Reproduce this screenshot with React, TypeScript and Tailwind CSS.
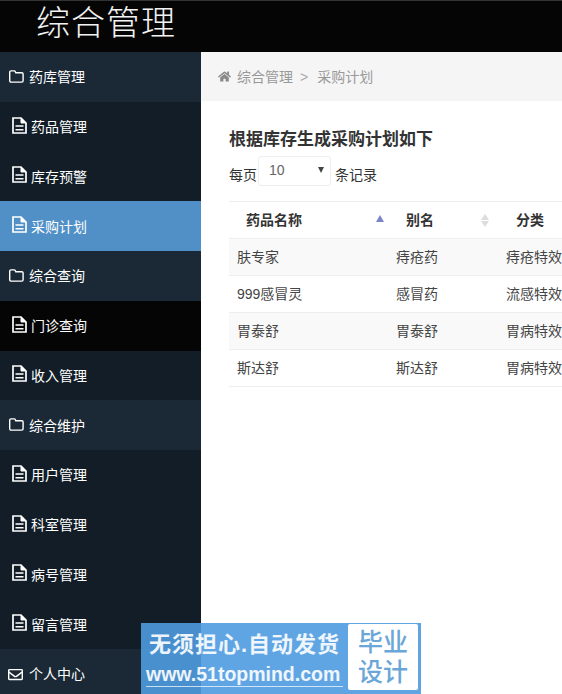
import { FaHome, FaRegEnvelope } from 'react-icons/fa';

const cjk = "font-['Liberation_Sans','Noto_Sans_CJK_SC',sans-serif]";

type MenuKind = 'group' | 'page' | 'active' | 'hover' | 'mail';

const menu: { label: string; kind: MenuKind }[] = [
  { label: '药库管理', kind: 'group' },
  { label: '药品管理', kind: 'page' },
  { label: '库存预警', kind: 'page' },
  { label: '采购计划', kind: 'active' },
  { label: '综合查询', kind: 'group' },
  { label: '门诊查询', kind: 'hover' },
  { label: '收入管理', kind: 'page' },
  { label: '综合维护', kind: 'group' },
  { label: '用户管理', kind: 'page' },
  { label: '科室管理', kind: 'page' },
  { label: '病号管理', kind: 'page' },
  { label: '留言管理', kind: 'page' },
  { label: '个人中心', kind: 'mail' },
];

const rowBg: Record<MenuKind, string> = {
  group: 'bg-[#1b2936]',
  page: 'bg-[#121d27]',
  active: 'bg-[#5190c6]',
  hover: 'bg-[#050505]',
  mail: 'bg-[#1b2936]',
};

const rows = [
  { name: '肤专家', alias: '痔疮药', type: '痔疮特效' },
  { name: '999感冒灵', alias: '感冒药', type: '流感特效' },
  { name: '胃泰舒', alias: '胃泰舒', type: '胃病特效' },
  { name: '斯达舒', alias: '斯达舒', type: '胃病特效' },
];

const FileIcon = () => (
  <svg viewBox="0 0 15 17" className="mr-[4px] h-[17px] w-[15px] -translate-y-[2px]" fill="none" stroke="currentColor" strokeWidth="1.7">
    <path d="M1 1h8l5 5v10H1z" />
    <path d="M9 1v5h5z" fill="currentColor" strokeWidth="1" />
    <path d="M3.5 9h8M3.5 12.7h8" strokeWidth="1.5" />
  </svg>
);

const FolderIcon = () => (
  <svg viewBox="0 0 15 13" className="mr-[5px] h-[13px] w-[15px] -translate-y-[1px]" fill="none" stroke="currentColor" strokeWidth="1.4">
    <path d="M2 .9h3.2c.7 0 1 .4 1.2 1l.3.9h6.1c.7 0 1.3.6 1.3 1.3v6.7c0 .7-.6 1.3-1.3 1.3H2c-.7 0-1.3-.6-1.3-1.3V2.2C.7 1.5 1.3.9 2 .9z" />
  </svg>
);

const MenuItem = ({ label, kind }: { label: string; kind: MenuKind }) => {
  const isPage = kind === 'page' || kind === 'active' || kind === 'hover';
  return (
    <div className={`flex h-[49.75px] shrink-0 items-center pt-[1px] text-sm text-white ${rowBg[kind]} ${isPage ? 'pl-[12px]' : 'pl-[9px]'}`}>
      {kind === 'mail' ? (
        <FaRegEnvelope className="mr-[5px] h-[15px] w-[15px] -translate-x-px" />
      ) : isPage ? (
        <FileIcon />
      ) : (
        <FolderIcon />
      )}
      <span>{label}</span>
    </div>
  );
};

const App = () => {
  return (
    <div className={`relative flex h-[694px] w-[562px] flex-col overflow-hidden bg-white ${cjk}`}>
      <header className="flex h-[52px] shrink-0 items-center border-t border-[#333] bg-[#050505] pl-[36px] pb-[8px]">
        <h1 className="text-[34px] font-light leading-none tracking-[1px] text-[#f2f2f2]">综合管理</h1>
      </header>

      <div className="flex min-h-0 flex-1">
        <nav className="flex w-[201px] shrink-0 flex-col overflow-hidden">
          {menu.map((item) => (
            <MenuItem key={item.label} label={item.label} kind={item.kind} />
          ))}
        </nav>

        <main className="min-w-0 flex-1 overflow-hidden">
          <div className="flex h-[49px] items-center bg-[#f5f5f5] pl-[17px] text-sm text-[#999]">
            <FaHome className="mr-[6px] h-[13px] w-[13px] text-[#8a8a8a]" />
            <span>综合管理</span>
            <span className="ml-[7px] mr-[9px] text-[#aaa]">&gt;</span>
            <span>采购计划</span>
          </div>

          <div className="pl-[28px] pt-[27px]">
            <h2 className="text-[17px] font-bold leading-[24px] text-[#333]">根据库存生成采购计划如下</h2>

            <div className="mt-[4px] flex items-end text-sm text-[#333]">
              <span className="pb-[1px]">每页</span>
              <div className="ml-[1px] flex h-[30px] w-[73px] items-center justify-between rounded-[3px] border border-[#eee] pl-[10px] pr-[6px] text-[#666]">
                <span className="-translate-y-[1px]">10</span>
                <span className="-translate-y-[1px] border-x-[3.5px] border-t-[6px] border-x-transparent border-t-[#444]" />
              </div>
              <span className="ml-[4px] pb-[1px]">条记录</span>
            </div>

            <table className="mt-[15px] w-[340px] table-fixed border-collapse text-sm text-[#444]">
              <colgroup>
                <col className="w-[160px]" />
                <col className="w-[110px]" />
                <col className="w-[70px]" />
              </colgroup>
              <thead>
                <tr className="h-[37px] border-y border-[#eee] text-left font-bold text-[#333]">
                  <th className="pl-[17px]">
                    <div className="flex items-center justify-between pr-[5px]">
                      药品名称
                      <span className="-translate-y-[2px] border-x-[4px] border-b-[7px] border-x-transparent border-b-[#7a86cc]" />
                    </div>
                  </th>
                  <th className="pl-[17px]">
                    <div className="flex items-center justify-between pr-[10px]">
                      别名
                      <span className="flex flex-col gap-[1px]">
                        <span className="border-x-[4px] border-b-[6px] border-x-transparent border-b-[#ddd]" />
                        <span className="border-x-[4px] border-t-[6px] border-x-transparent border-t-[#ddd]" />
                      </span>
                    </div>
                  </th>
                  <th className="whitespace-nowrap pl-[17px]">分类</th>
                </tr>
              </thead>
              <tbody>
                {rows.map((row, i) => (
                  <tr key={row.name} className={`h-[37px] border-b border-[#eee] ${i % 2 === 0 ? 'bg-[#f9f9f9]' : 'bg-white'}`}>
                    <td className="pl-[8px]">{row.name}</td>
                    <td className="pl-[7px]">{row.alias}</td>
                    <td className="whitespace-nowrap pl-[7px]">{row.type}</td>
                  </tr>
                ))}
              </tbody>
            </table>
          </div>
        </main>
      </div>

      <div className="absolute left-[141px] top-[623px] flex h-[71px] w-[280px] bg-[#4f9be0]/90">
        <div className="w-[207px] pl-[5px] pt-[8px]">
          <div className="pl-[3px] text-[22px] font-bold leading-[28px] tracking-[1px] whitespace-nowrap text-white/90">无须担心.自动发货</div>
          <div className="mt-[3px] w-[197px] whitespace-nowrap border-b border-white/70 text-[19.5px] font-bold leading-[24px] text-white/90">www.51topmind.com</div>
        </div>
        <div className="mt-[1px] flex h-[66px] w-[70px] flex-col items-center justify-center rounded-[2px] bg-white text-[25px] font-medium leading-[30px] text-[#6aa6d8]">
          <span>毕业</span>
          <span>设计</span>
        </div>
      </div>
    </div>
  );
};

export default App;
